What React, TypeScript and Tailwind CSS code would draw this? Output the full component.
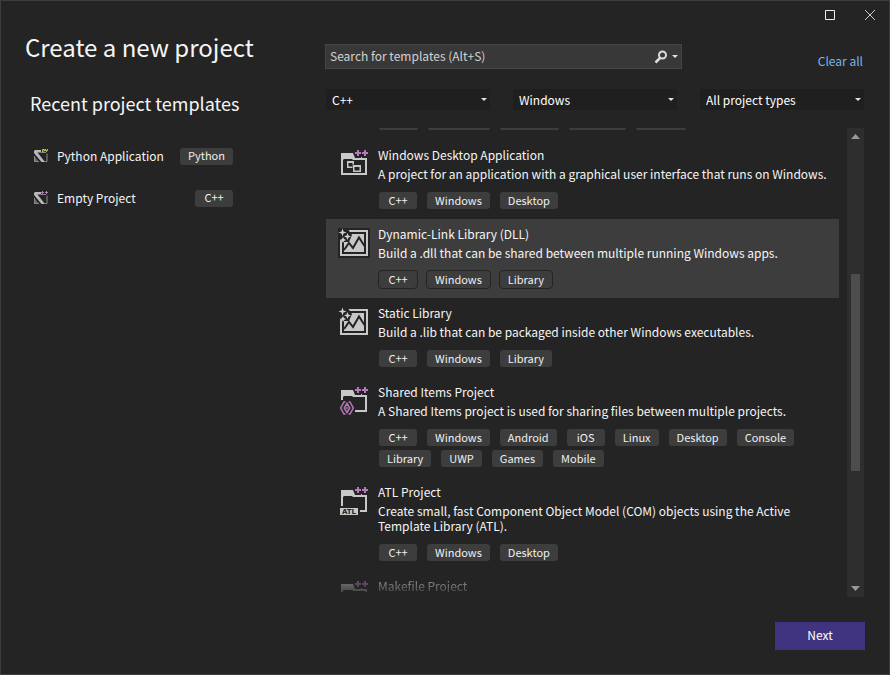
import type { ReactNode } from "react";

type IconKind = "desktop" | "library" | "shared" | "atl" | "folder";

interface Template {
  title: string;
  description: string;
  tags: string[];
  icon: IconKind;
  selected?: boolean;
}

const templates: Template[] = [
  {
    title: "Windows Desktop Application",
    description: "A project for an application with a graphical user interface that runs on Windows.",
    tags: ["C++", "Windows", "Desktop"],
    icon: "desktop",
  },
  {
    title: "Dynamic-Link Library (DLL)",
    description: "Build a .dll that can be shared between multiple running Windows apps.",
    tags: ["C++", "Windows", "Library"],
    icon: "library",
    selected: true,
  },
  {
    title: "Static Library",
    description: "Build a .lib that can be packaged inside other Windows executables.",
    tags: ["C++", "Windows", "Library"],
    icon: "library",
  },
  {
    title: "Shared Items Project",
    description: "A Shared Items project is used for sharing files between multiple projects.",
    tags: ["C++", "Windows", "Android", "iOS", "Linux", "Desktop", "Console", "Library", "UWP", "Games", "Mobile"],
    icon: "shared",
  },
  {
    title: "ATL Project",
    description: "Create small, fast Component Object Model (COM) objects using the Active Template Library (ATL).",
    tags: ["C++", "Windows", "Desktop"],
    icon: "atl",
  },
];

function Tag({ children, selected = false }: { children: ReactNode; selected?: boolean }) {
  return (
    <span
      className={`flex h-[19px] min-w-10 items-center justify-center rounded border bg-[#3d3d3d] bg-clip-padding px-2 pb-0.5 text-[11px] leading-4 whitespace-nowrap text-[#f0f0f0] ${
        selected ? "border-[#242424]" : "border-transparent"
      }`}
    >
      {children}
    </span>
  );
}

function Caret() {
  return (
    <svg width="6" height="3" viewBox="0 0 6 3" className="shrink-0" aria-hidden="true">
      <path d="M0 0H6L3 3Z" fill="#e0e0e0" />
    </svg>
  );
}

function PlusPlus() {
  return <path d="M19 1h2v2h2v2h-2v2h-2v-2h-2v-2h2zM26 1h2v2h2v2h-2v2h-2v-2h-2v-2h2z" fill="#b877bb" />;
}

function TemplateIcon({ kind }: { kind: IconKind }) {
  if (kind === "library") {
    return (
      <svg width="32" height="32" viewBox="0 0 32 32" className="shrink-0" aria-hidden="true">
        <path d="M0 0H32V30H0Z" fill="#242424" />
        <path d="M2 2H30V28H2ZM4 4V26H28V4Z" fill="#c8c8c8" fillRule="evenodd" />
        <path d="M6 6H26V24H6Z" fill="#c8c8c8" />
        <path d="M6 22L11 15L15 20L21 9.500L26.500 18" fill="none" stroke="#242424" strokeWidth="2" />
        <path d="M0 0H9L14 7L11 14H5L0 10Z" fill="#242424" />
        <path
          d="M4.500 0.500L5.500 3.500L8.500 4.500L5.500 5.500L4.500 8.500L3.500 5.500L0.500 4.500L3.500 3.500ZM9.500 5L10.500 7.500L13 8.500L10.500 9.500L9.500 12L8.500 9.500L6 8.500L8.500 7.500ZM5 9L6 11L8 12L6 13L5 15L4 13L2 12L4 11Z"
          fill="#d0d0d0"
        />
      </svg>
    );
  }
  return (
    <svg width="32" height="32" viewBox="0 0 32 32" className="shrink-0" aria-hidden="true">
      <path d="M3 4H15L17 9H29V26H3ZM5 11V24H27V11H15L14 10H6Z" fill="#c8c8c8" fillRule="evenodd" />
      <path d="M23 8H24V9H23Z" fill="#c8c8c8" />
      <PlusPlus />
      {kind === "desktop" && (
        <>
          <path d="M9 12H16V19H9ZM10.500 14V17.500H14.500V14Z" fill="#c8c8c8" fillRule="evenodd" />
          <path d="M14.500 15.500H23V23H14.500Z" fill="#242424" />
          <path d="M15 16H23V23H15ZM16.500 18V21.500H21.500V18Z" fill="#c8c8c8" fillRule="evenodd" />
        </>
      )}
      {kind === "shared" && (
        <>
          <path d="M1 14H17V30H1Z" fill="#242424" />
          <path
            d="M7.500 16H6L2.700 22L6 28H7.500M10.500 16H12L15.300 22L12 28H10.500M9 17.500L6.200 22L9 26.500L11.800 22Z"
            fill="none"
            stroke="#b877bb"
            strokeWidth="1.500"
          />
          <circle cx="9" cy="22" r="1" fill="#b877bb" />
        </>
      )}
      {kind === "atl" && (
        <>
          <path d="M1 20H22V30H1Z" fill="#242424" />
          <path d="M2 22H20V29H2Z" fill="#c8c8c8" />
          <text x="11" y="28" textAnchor="middle" fontSize="7" fontWeight="700" fill="#242424" fontFamily="DejaVu Sans">
            ATL
          </text>
        </>
      )}
    </svg>
  );
}

function RecentIcon({ language }: { language: "py" | "cpp" }) {
  return (
    <svg width="16" height="16" viewBox="0 0 16 16" className="shrink-0" aria-hidden="true">
      <path d="M2 2H8V4.500H4.500L12 14H8.500L1 5V3Z" fill="#b8b8b8" />
      <path d="M1 8L6 14H1Z" fill="#6e6e6e" />
      <path d="M1.500 8V13.500H6M14 5.500V13.500H11.500M8 4.500H13" fill="none" stroke="#8a8a8a" />
      {language === "py" ? (
        <path d="M9.500 4V1.500H11.500V3H9.500M12.500 1V2.500H14.500V1M13.500 2.500V4" fill="none" stroke="#b5c45b" />
      ) : (
        <path d="M8 2.500H11M9.500 1V4M12 2.500H15M13.500 1V4" fill="none" stroke="#b877bb" />
      )}
    </svg>
  );
}

function RecentItem({ name, tag, language }: { name: string; tag: string; language: "py" | "cpp" }) {
  return (
    <li className="flex h-[42px] items-center">
      <RecentIcon language={language} />
      <span className="ml-2 flex-1">{name}</span>
      <Tag>{tag}</Tag>
    </li>
  );
}

function Filter({ label, value }: { label: string; value: string }) {
  return (
    <div className="flex h-[21px] flex-1 items-center bg-[#1f1f1f] pr-[3px]">
      <select
        aria-label={label}
        className="h-full min-w-0 flex-1 appearance-none bg-transparent pl-1.5 leading-5 text-white outline-none"
      >
        <option>{value}</option>
      </select>
      <Caret />
    </div>
  );
}

function TemplateRow({ template }: { template: Template }) {
  const { title, description, tags, icon, selected } = template;
  return (
    <li className={`flex gap-2 pr-2 pb-[9px] pl-3 ${selected ? "bg-[#3d3d3d]" : ""}`}>
      <div className="pt-[9px]">
        <TemplateIcon kind={icon} />
      </div>
      <div className="min-w-0 flex-1 pt-1.5">
        <h3 className="leading-[18px]">{title}</h3>
        <p className="mt-0.5 leading-[15px]">{description}</p>
        <div className="mt-2.5 flex flex-wrap gap-x-2 gap-y-0.5">
          {tags.map((tag) => (
            <Tag key={tag} selected={selected}>
              {tag}
            </Tag>
          ))}
        </div>
      </div>
    </li>
  );
}

export default function App() {
  return (
    <div className="flex min-h-screen flex-col border border-[#3d3d3d] bg-[#242424] font-['Noto_Sans_CJK_KR',sans-serif] text-[12px] text-[#f5f5f5]">
      <div className="flex h-7 items-center justify-end gap-[30px] pr-[14px]">
        <button type="button" aria-label="Maximize">
          <svg width="10" height="10" viewBox="0 0 10 10" aria-hidden="true">
            <path d="M.5 .5H9.500V9.500H.5Z" fill="none" stroke="#eeeeee" />
          </svg>
        </button>
        <button type="button" aria-label="Close">
          <svg width="10" height="10" viewBox="0 0 10 10" aria-hidden="true">
            <path d="M0 0L10 10M10 0L0 10" fill="none" stroke="#cccccc" />
          </svg>
        </button>
      </div>

      <div className="flex flex-1 pr-6">
        <aside className="w-[324px] shrink-0 pl-6">
          <h1 className="text-[24px] leading-[36px]">Create a new project</h1>
          <section className="pr-[91px] pl-[5px]">
            <h2 className="mt-[22px] text-[18px] leading-8 whitespace-nowrap">Recent project templates</h2>
            <ul className="mt-4 pl-[3px]">
              <RecentItem name="Python Application" tag="Python" language="py" />
              <RecentItem name="Empty Project" tag="C++" language="cpp" />
            </ul>
          </section>
        </aside>

        <main className="min-w-0 flex-1">
          <div className="flex items-start justify-between pt-[15px]">
            <div className="flex h-[25px] w-[357px] items-center border border-[#464646] bg-[#383838] pr-[3px]">
              <input
                type="text"
                aria-label="Search for templates"
                placeholder="Search for templates (Alt+S)"
                className="min-w-0 flex-1 bg-transparent pb-0.5 pl-1 leading-5 outline-none placeholder:text-[#d2d2d2]"
              />
              <button type="button" aria-label="Search" className="flex items-center gap-1">
                <svg width="14" height="14" viewBox="0 0 14 14" aria-hidden="true">
                  <circle cx="8.500" cy="5" r="3.500" fill="none" stroke="#dddddd" strokeWidth="2" />
                  <path d="M6 8L1.500 12.500" stroke="#dddddd" strokeWidth="2.500" />
                </svg>
                <Caret />
              </button>
            </div>
            <a href="#clear" className="mt-[7px] mr-0.5 leading-5 text-[#7ab5e8]">
              Clear all
            </a>
          </div>

          <div className="mt-[18px] flex gap-[23px] pr-px pl-px">
            <Filter label="Language" value="C++" />
            <Filter label="Platform" value="Windows" />
            <Filter label="Project type" value="All project types" />
          </div>

          <div className="mt-[18px] flex h-[469px] justify-between pr-px pl-px">
            <ul className="mr-2 h-[464px] min-w-0 flex-1 overflow-hidden">
              <li className="flex h-3 gap-2.5 pl-[53px]" aria-hidden="true">
                <span className="h-0.5 w-[39px] rounded-b bg-[#3d3d3d]" />
                <span className="h-0.5 w-[62px] rounded-b bg-[#3d3d3d]" />
                <span className="h-0.5 w-[59px] rounded-b bg-[#3d3d3d]" />
                <span className="h-0.5 w-[57px] rounded-b bg-[#3d3d3d]" />
                <span className="h-0.5 w-[50px] rounded-b bg-[#3d3d3d]" />
              </li>
              {templates.map((template) => (
                <TemplateRow key={template.title} template={template} />
              ))}
              <li className="flex h-[21px] gap-2 overflow-hidden pl-3 [mask-image:linear-gradient(to_bottom,rgba(0,0,0,0.75),rgba(0,0,0,0.2))]">
                <div className="pt-[9px]">
                  <TemplateIcon kind="folder" />
                </div>
                <h3 className="pt-1.5 leading-[18px]">Makefile Project</h3>
              </li>
            </ul>
            <div className="flex w-[17px] shrink-0 flex-col items-center justify-between bg-[#2e2e2e] py-1.5">
              <svg width="9" height="5" viewBox="0 0 9 5" aria-hidden="true">
                <path d="M0 5H9L4.500 0Z" fill="#999999" />
              </svg>
              <div className="mt-[135px] mb-auto h-[197px] w-[9px] bg-[#4d4d4d]" />
              <svg width="9" height="5" viewBox="0 0 9 5" aria-hidden="true">
                <path d="M0 0H9L4.500 5Z" fill="#999999" />
              </svg>
            </div>
          </div>

          <div className="flex justify-end pt-[25px] pb-6">
            <button type="button" className="h-7 w-[90px] bg-[#403480] pb-0.5 leading-5 text-white">
              Next
            </button>
          </div>
        </main>
      </div>
    </div>
  );
}
